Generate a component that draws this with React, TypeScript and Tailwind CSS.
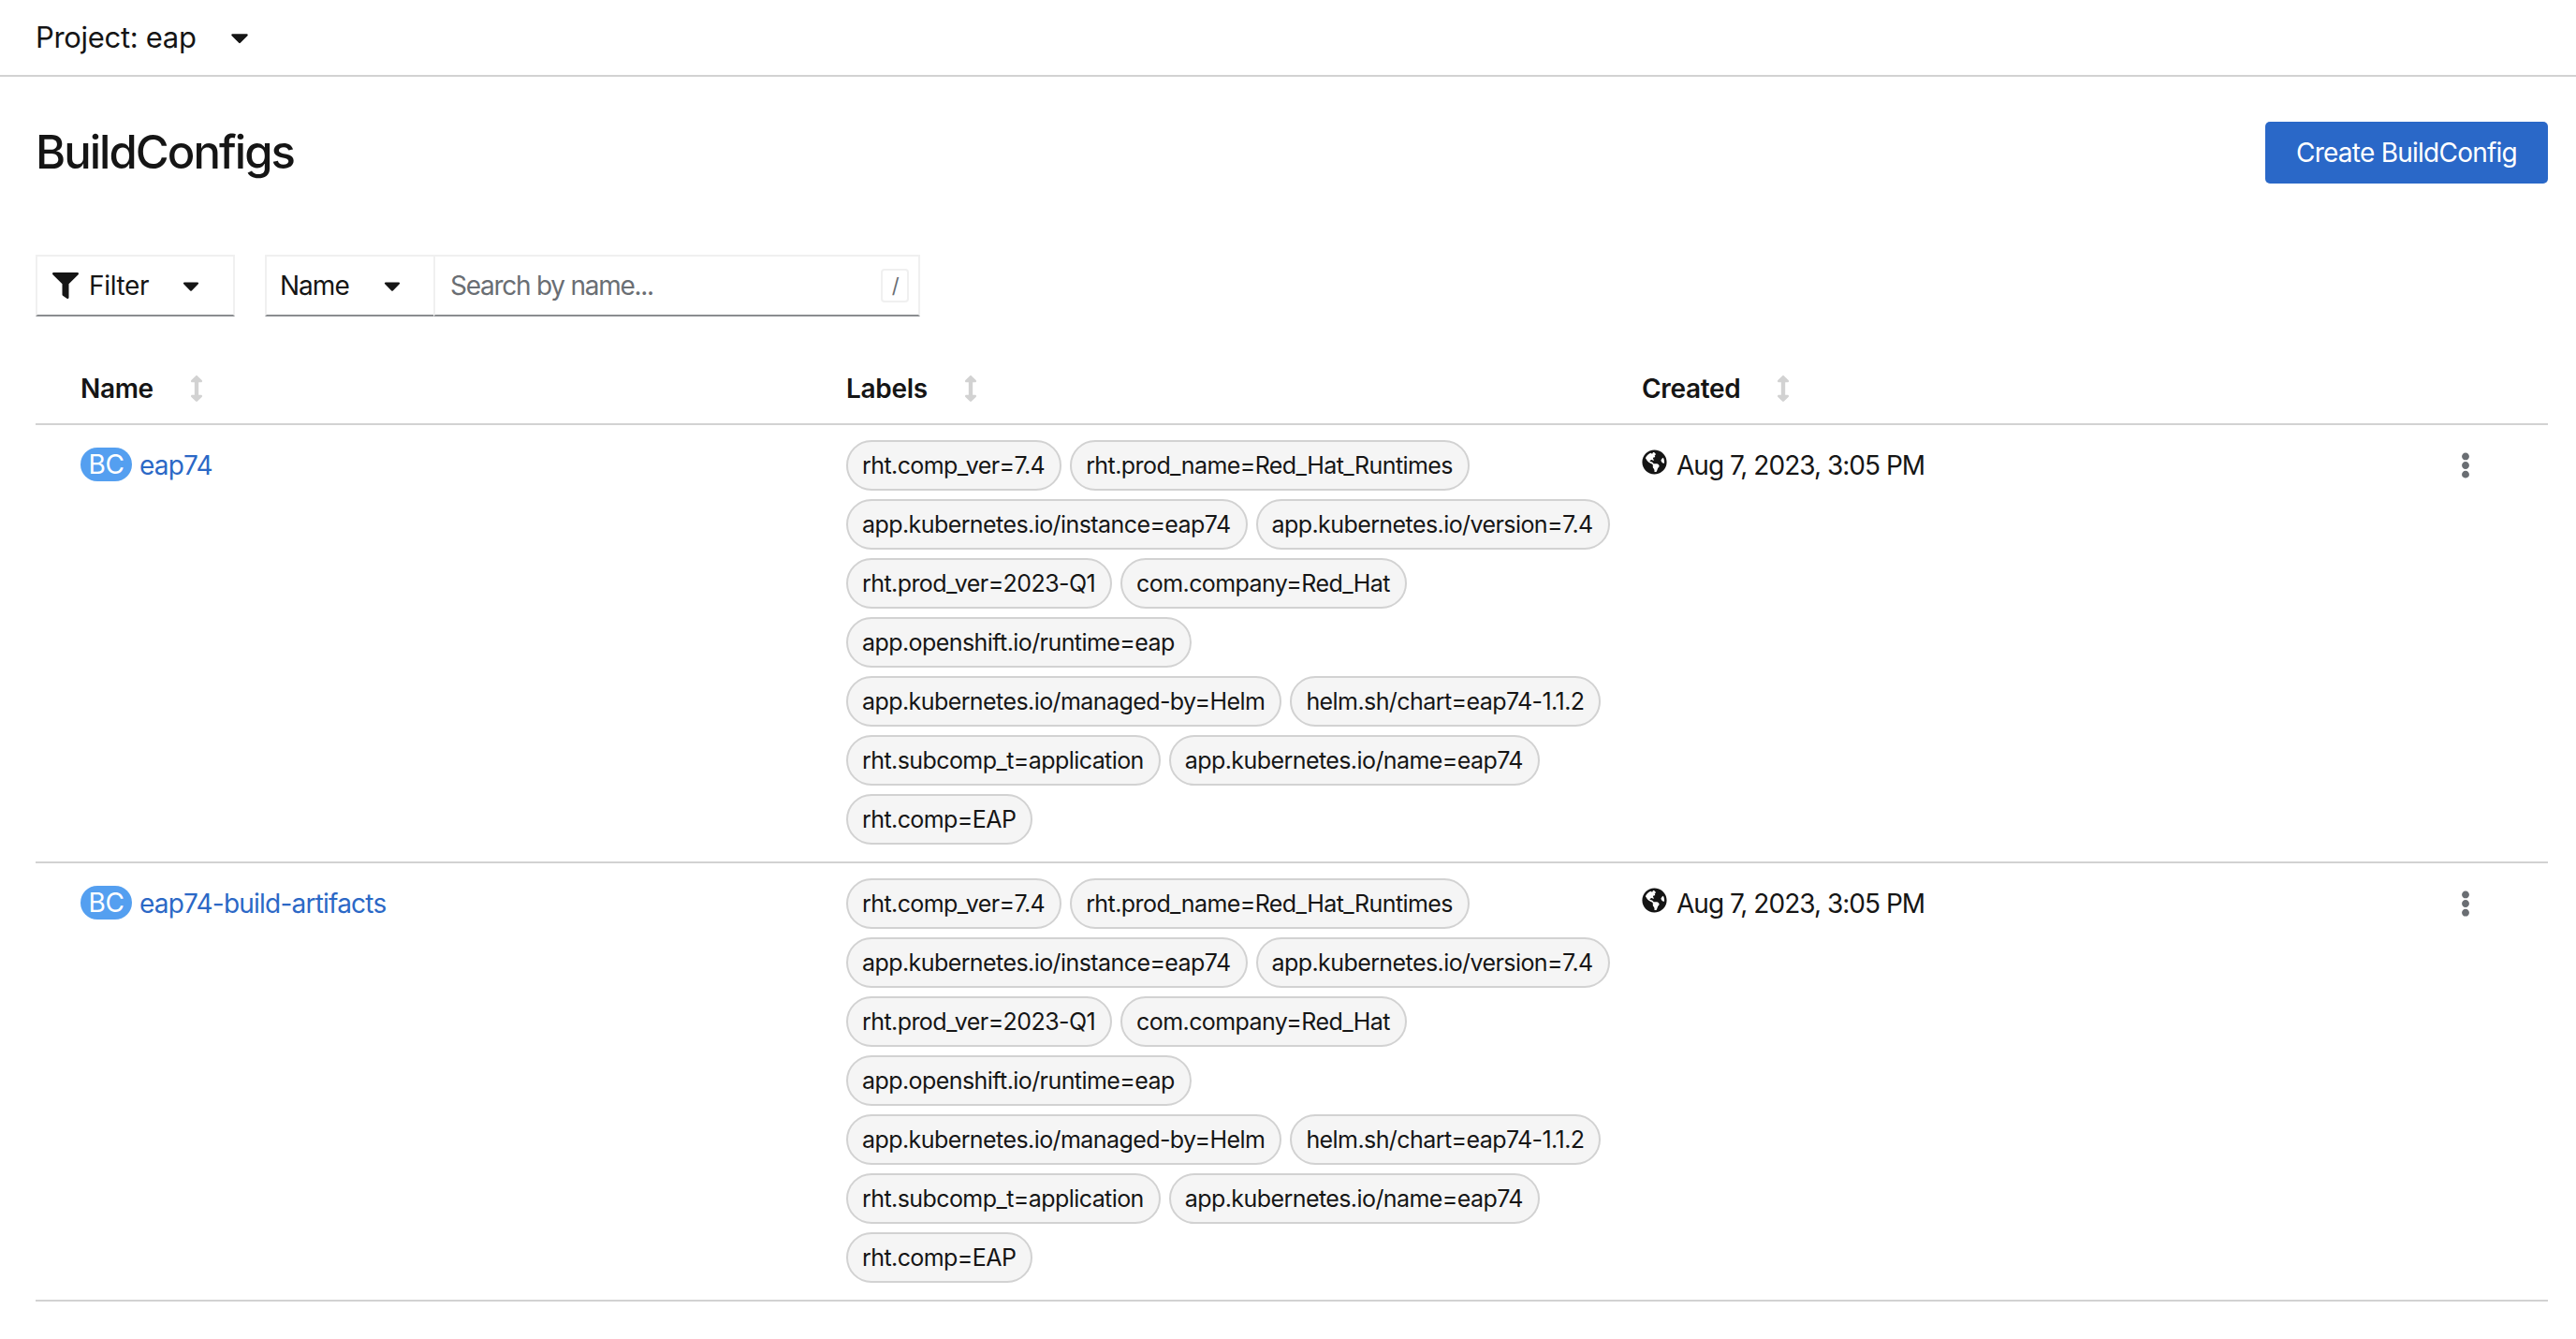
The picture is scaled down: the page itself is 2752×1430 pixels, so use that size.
import { FaArrowsAltV, FaCaretDown, FaEllipsisV, FaFilter, FaGlobeAmericas } from "react-icons/fa";

const labelRows = [
  ["rht.comp_ver=7.4", "rht.prod_name=Red_Hat_Runtimes"],
  ["app.kubernetes.io/instance=eap74", "app.kubernetes.io/version=7.4"],
  ["rht.prod_ver=2023-Q1", "com.company=Red_Hat"],
  ["app.openshift.io/runtime=eap"],
  ["app.kubernetes.io/managed-by=Helm", "helm.sh/chart=eap74-1.1.2"],
  ["rht.subcomp_t=application", "app.kubernetes.io/name=eap74"],
  ["rht.comp=EAP"],
];

const builds = ["eap74", "eap74-build-artifacts"];

function SortHeader({ title }: { title: string }) {
  return (
    <div className="flex items-center gap-[32px] pl-[48px] font-semibold text-[28px]">
      <span>{title}</span>
      <FaArrowsAltV className="w-[28px] h-[28px] text-[#d2d2d2]" />
    </div>
  );
}

function BuildRow({ name }: { name: string }) {
  return (
    <div className="grid grid-cols-[818px_850px_1fr_178px] border-b-2 border-[#d2d2d2] h-[468px] pl-[48px]">
      <div className="flex items-start gap-[8px] pt-[24px]">
        <span className="flex items-center justify-center w-[55px] h-[36px] rounded-[18px] bg-[#549ff0] text-white text-[28px] leading-none">
          BC
        </span>
        <a className="text-[#2b68c6] text-[28px] leading-[38px] tracking-[-0.028em]">{name}</a>
      </div>
      <div className="flex flex-col gap-[9px] pt-[16px]">
        {labelRows.map((row) => (
          <div key={row[0]} className="flex gap-[9px]">
            {row.map((label) => (
              <span
                key={label}
                className="flex items-center h-[54px] pt-[2px] pl-[15px] pr-[16px] rounded-[27px] border-2 border-[#d2d2d2] bg-[#f5f5f5] text-[25px] tracking-[-0.023em]"
              >
                {label}
              </span>
            ))}
          </div>
        ))}
      </div>
      <div className="flex items-start gap-[10px] pt-[25px] text-[28px] leading-[36px] tracking-[-0.035em]">
        <FaGlobeAmericas className="w-[27px] h-[27px] mt-[1px] text-[#151515]" />
        <span>Aug 7, 2023, 3:05 PM</span>
      </div>
      <div className="flex items-start pt-[29px] pl-[76px]">
        <FaEllipsisV className="w-[28px] h-[28px] text-[#6a6e73]" />
      </div>
    </div>
  );
}

export default function App() {
  return (
    <div className="min-h-[1430px] bg-white text-[#151515] font-['Inter',sans-serif] tracking-[-0.02em]">
      <div className="flex items-center h-[82px] pl-[38px] border-b-2 border-[#d2d2d2] text-[31px]">
        <span>Project: eap</span>
        <FaCaretDown className="w-[30px] h-[30px] ml-[31px]" />
      </div>

      <div className="pl-[38px] pr-[30px]">
        <div className="flex items-start justify-between pt-[48px]">
          <h1 className="text-[49px] leading-[66px] font-medium tracking-[-0.04em]">BuildConfigs</h1>
          <button className="w-[302px] h-[66px] rounded-[5px] bg-[#2a68c8] text-white text-[28px] tracking-[-0.027em]">
            Create BuildConfig
          </button>
        </div>

        <div className="flex mt-[76px] text-[28px]">
          <div className="flex items-center w-[213px] h-[66px] pl-[16px] border-2 border-[#f0f0f0] border-b-[#8a8d90]">
            <FaFilter className="w-[28px] h-[28px]" />
            <span className="ml-[11px]">Filter</span>
            <FaCaretDown className="w-[28px] h-[28px] ml-[31px]" />
          </div>
          <div className="flex items-center w-[180px] h-[66px] ml-[32px] pl-[14px] border-2 border-r-0 border-[#f0f0f0] border-b-[#8a8d90] tracking-[-0.035em]">
            <span>Name</span>
            <FaCaretDown className="w-[28px] h-[28px] ml-[32px]" />
          </div>
          <div className="flex items-center justify-between w-[520px] h-[66px] pl-[16px] pr-[10px] border-2 border-[#f0f0f0] border-b-[#8a8d90] text-[#6a6e73] tracking-[-0.045em]">
            <span>Search by name...</span>
            <span className="flex items-center justify-center w-[30px] h-[36px] rounded-[4px] border-2 border-[#f0f0f0] text-[22px]">
              /
            </span>
          </div>
        </div>

        <div className="mt-[32px]">
          <div className="grid grid-cols-[818px_850px_1fr] items-center h-[84px] pt-[7px] border-b-2 border-[#d2d2d2]">
            <SortHeader title="Name" />
            <SortHeader title="Labels" />
            <SortHeader title="Created" />
          </div>
          {builds.map((name) => (
            <BuildRow key={name} name={name} />
          ))}
        </div>
      </div>
    </div>
  );
}
